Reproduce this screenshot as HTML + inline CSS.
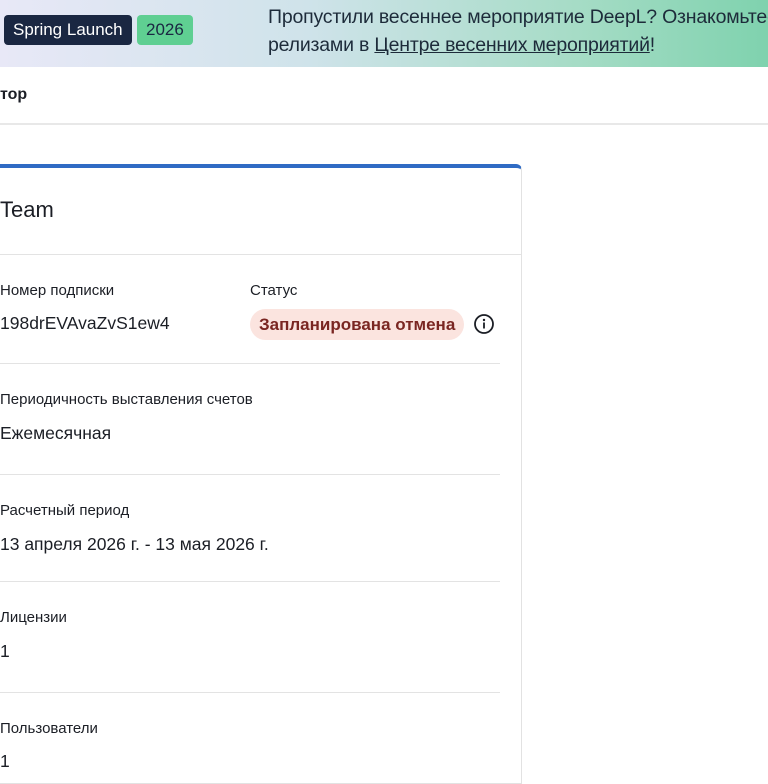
<!DOCTYPE html>
<html><head><meta charset="utf-8"><style>
body{margin:0;width:768px;height:768px;overflow:hidden;background:#fff;font-family:"Liberation Sans",sans-serif;color:#1b1e25;position:relative}
.ban{position:absolute;left:0;top:0;width:768px;height:67px;background:linear-gradient(90deg,#e8e8f7 0%,#cfe3ea 40%,#a6dcc6 75%,#7fd2ae 100%)}
.pill{position:absolute;top:15px;height:30px;line-height:30px;font-size:17px;border-radius:4px;padding:0 9px}
.bt{position:absolute;left:268px;font-size:19.5px;color:#1d2b3a;white-space:nowrap;letter-spacing:-0.2px}
.a{position:absolute;white-space:nowrap}
.lab{font-size:15px;color:#1b1e25}
.val{font-size:17.5px;color:#1b1e25}
.hr{position:absolute;left:0;height:1px;background:#e3e3e3}
</style></head><body>
<div class="ban">
<div class="pill" style="left:4px;background:#1a2742;color:#fff">Spring Launch</div>
<div class="pill" style="left:137px;background:#5fcf92;color:#1a2742">2026</div>
<div class="bt" style="top:6px">Пропустили весеннее мероприятие DeepL? Ознакомьтесь</div>
<div class="bt" style="top:34px">релизами в <u>Центре весенних мероприятий</u>!</div>
</div>
<div class="a" style="left:0;top:86px;font-size:16px;font-weight:bold">тор</div>
<div class="hr" style="top:123px;width:768px;height:2px;background:#e8e8e8"></div>
<div style="position:absolute;left:-10px;top:164px;width:532px;height:620px;border:1px solid #e2e2e2;border-top:4px solid #2f6bc4;border-radius:6px 6px 0 0;box-sizing:border-box"></div>
<div class="a" style="left:0;top:197px;font-size:22px">Team</div>
<div class="hr" style="top:254px;width:521px"></div>
<div class="a lab" style="left:0;top:282px">Номер подписки</div>
<div class="a val" style="left:0;top:313px">198drEVAvaZvS1ew4</div>
<div class="a lab" style="left:250px;top:282px">Статус</div>
<div class="a" style="left:250px;top:309px;height:31px;line-height:31px;padding:0 9px;border-radius:16px;background:#fbe4df;color:#7a2622;font-size:17px;font-weight:bold">Запланирована отмена</div>
<svg class="a" style="left:473px;top:313px" width="22" height="22" viewBox="0 0 22 22"><circle cx="11" cy="11" r="9" fill="none" stroke="#1b1e25" stroke-width="1.8"/><circle cx="11" cy="7" r="1.2" fill="#1b1e25"/><rect x="10.1" y="9.5" width="1.8" height="6" fill="#1b1e25"/></svg>
<div class="hr" style="top:363px;width:500px"></div>
<div class="a lab" style="left:0;top:391px">Периодичность выставления счетов</div>
<div class="a val" style="left:0;top:423px">Ежемесячная</div>
<div class="hr" style="top:474px;width:500px"></div>
<div class="a lab" style="left:0;top:502px">Расчетный период</div>
<div class="a val" style="left:0;top:534px">13 апреля 2026 г. - 13 мая 2026 г.</div>
<div class="hr" style="top:581px;width:500px"></div>
<div class="a lab" style="left:0;top:609px">Лицензии</div>
<div class="a val" style="left:0;top:641px">1</div>
<div class="hr" style="top:692px;width:500px"></div>
<div class="a lab" style="left:0;top:720px">Пользователи</div>
<div class="a val" style="left:0;top:751px">1</div>
</body></html>
